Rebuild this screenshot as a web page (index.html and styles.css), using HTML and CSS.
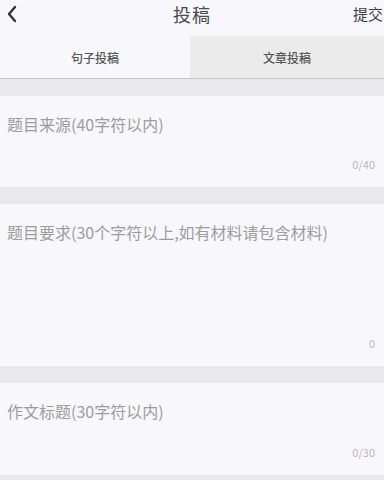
FILE: index.html
```html
<!DOCTYPE html>
<html lang="zh">
<head>
<meta charset="utf-8">
<link rel="stylesheet" href="styles.css">
</head>
<body>
<div class="page">
  <header class="topbar">
    <span class="back"><svg width="12" height="18" viewBox="0 0 12 18"><polyline points="9,2 3,9 9,16" fill="none" stroke="#333" stroke-width="2.4" stroke-linecap="round" stroke-linejoin="round"/></svg></span>
    <span class="title">投稿</span>
    <span class="submit">提交</span>
  </header>
  <nav class="tabs">
    <div class="tab active">句子投稿</div>
    <div class="tab">文章投稿</div>
  </nav>
  <div class="form">
    <section class="field f1">
      <div class="ph">题目来源(40字符以内)</div>
      <div class="count">0/40</div>
    </section>
    <section class="field f2">
      <div class="ph">题目要求(30个字符以上,如有材料请包含材料)</div>
      <div class="count">0</div>
    </section>
    <section class="field f3">
      <div class="ph">作文标题(30字符以内)</div>
      <div class="count">0/30</div>
    </section>
  </div>
</div>
</body>
</html>
```

FILE: styles.css
```css
html, body {
  margin: 0;
  padding: 0;
  background: #e9e9eb;
}
body {
  font-family: "Noto Sans CJK SC", "Noto Sans", "Liberation Sans", sans-serif;
  width: 384px;
  height: 480px;
  overflow: hidden;
}
.page {
  display: flex;
  flex-direction: column;
}
.topbar {
  height: 36px;
  background: #f8f7fc;
  display: grid;
  grid-template-columns: 1fr auto 1fr;
  align-items: center;
}
.back {
  display: flex;
  align-items: center;
  padding-left: 6px;
  margin-top: -8px;
}
.title {
  font-size: 18px;
  color: #4a4a4a;
  margin-top: -9px;
  letter-spacing: 1px;
}
.submit {
  justify-self: end;
  font-size: 15px;
  color: #3e3e3e;
  margin-right: 1px;
  margin-top: -9px;
  white-space: nowrap;
}
.tabs {
  display: grid;
  grid-template-columns: 190px 1fr;
  height: 42px;
  border-bottom: 1px solid #c9c9c9;
}
.tab {
  display: flex;
  align-items: center;
  justify-content: center;
  font-size: 12px;
  font-weight: 500;
  color: #555;
  background: #ebebeb;
  padding-top: 1px;
}
.tab.active {
  background: #f8f7fc;
}
.form {
  display: flex;
  flex-direction: column;
  gap: 17px;
  padding-top: 17px;
}
.field {
  background: #f8f7fc;
  display: flex;
  flex-direction: column;
  justify-content: space-between;
  padding: 18px 9px 17px 7px;
  box-sizing: border-box;
}
.f1 { height: 91px; }
.f2 { height: 162px; }
.f3 { height: 92px; }
.ph {
  font-size: 16px;
  line-height: 20px;
  color: #9d9d9d;
}
.count {
  align-self: flex-end;
  font-size: 11px;
  line-height: 12px;
  color: #b8b8b8;
}
```
